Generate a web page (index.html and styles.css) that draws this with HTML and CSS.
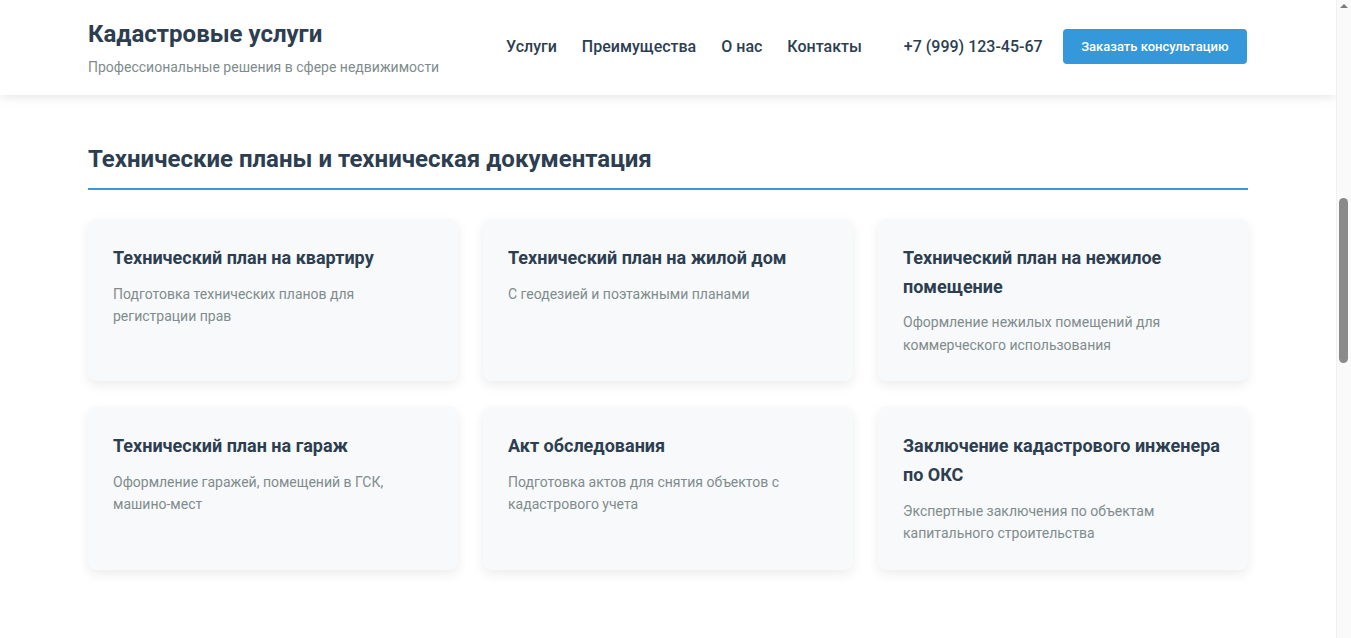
FILE: index.html
```html
<!DOCTYPE html>
<html lang="ru">
<head>
    <meta charset="UTF-8">
    <meta name="viewport" content="width=device-width, initial-scale=1.0">
    <title>Кадастровые услуги</title>
    <link rel="stylesheet" href="styles.css">
</head>
<body>
    <!-- Header -->
    <header class="site-header">
        <div class="container header-inner">
            <div class="logo">
                <h1>Кадастровые услуги</h1>
                <p>Профессиональные решения в сфере недвижимости</p>
            </div>
            <nav class="main-nav">
                <a href="#services">Услуги</a>
                <a href="#advantages">Преимущества</a>
                <a href="#about">О нас</a>
                <a href="#contacts">Контакты</a>
            </nav>
            <div class="header-contacts">
                <span class="phone">+7 (999) 123-45-67</span>
                <button class="btn">Заказать консультацию</button>
            </div>
        </div>
    </header>

    <!-- Services -->
    <section class="services" id="services">
        <div class="container">
            <h2 class="section-title">Технические планы и техническая документация</h2>
            <div class="service-grid">
                <div class="service-card">
                    <h3>Технический план на квартиру</h3>
                    <p>Подготовка технических планов для регистрации прав</p>
                </div>
                <div class="service-card">
                    <h3>Технический план на жилой дом</h3>
                    <p>С геодезией и поэтажными планами</p>
                </div>
                <div class="service-card">
                    <h3>Технический план на нежилое помещение</h3>
                    <p>Оформление нежилых помещений для коммерческого использования</p>
                </div>
                <div class="service-card">
                    <h3>Технический план на гараж</h3>
                    <p>Оформление гаражей, помещений в ГСК, машино-мест</p>
                </div>
                <div class="service-card">
                    <h3>Акт обследования</h3>
                    <p>Подготовка актов для снятия объектов с кадастрового учета</p>
                </div>
                <div class="service-card">
                    <h3>Заключение кадастрового инженера по ОКС</h3>
                    <p>Экспертные заключения по объектам капитального строительства</p>
                </div>
            </div>
        </div>
    </section>

    <!-- Scrollbar of the page window -->
    <div class="scrollbar">
        <span class="scroll-arrow"></span>
        <span class="scroll-thumb"></span>
    </div>
</body>
</html>
```

FILE: styles.css
```css
body {
    font-family: Roboto, 'Noto Sans', sans-serif;
    margin: 0 15px 0 0;
    background-color: #ffffff;
    color: #2c3e50;
}

.container {
    max-width: 1160px;
    margin: 0 auto;
}

.site-header {
    background: #ffffff;
    box-shadow: 0 2px 10px rgba(0, 0, 0, 0.1);
    position: relative;
    z-index: 2;
}

.header-inner {
    display: flex;
    align-items: center;
    height: 95px;
}

.logo h1 {
    margin: 0 0 1px;
    font-size: 24px;
    font-weight: 700;
    line-height: 1.2;
    color: #2c3e50;
}

.logo p {
    margin: 11px 0 0;
    font-size: 14px;
    color: #7f8c8d;
}

.main-nav {
    display: flex;
    gap: 25px;
    margin-left: auto;
    margin-right: 42px;
    margin-bottom: 2px;
}

.main-nav a {
    color: #2c3e50;
    text-decoration: none;
    font-size: 16px;
    font-weight: 500;
}

.header-contacts {
    display: flex;
    align-items: center;
    gap: 20px;
    margin-right: 1px;
}

.phone {
    font-size: 16px;
    font-weight: 500;
    margin-bottom: 2px;
}

.btn {
    background-color: #3498db;
    color: #ffffff;
    border: none;
    border-radius: 4px;
    padding: 0 18.5px;
    height: 35px;
    margin-bottom: 2px;
    font-family: inherit;
    font-size: 13px;
    font-weight: 500;
    cursor: pointer;
}

.services {
    padding: 50px 0 60px;
}

.section-title {
    margin: 0 0 29px;
    padding-bottom: 14px;
    border-bottom: 2px solid #3498db;
    font-size: 24px;
    font-weight: 700;
    line-height: 1.2;
}

.service-grid {
    display: grid;
    grid-template-columns: repeat(3, 1fr);
    gap: 26px 25px;
}

.service-card {
    background: #f8f9fa;
    border-radius: 8px;
    padding: 25px;
    box-shadow: 0 4px 12px rgba(0, 0, 0, 0.08);
}

.service-card h3 {
    margin: 0 0 10px;
    font-size: 18px;
    font-weight: 700;
    line-height: 1.6;
}

.service-card p {
    margin: 0;
    font-size: 14px;
    line-height: 1.6;
    color: #7f8c8d;
}

.scrollbar {
    position: fixed;
    top: 0;
    right: 0;
    bottom: 0;
    width: 15px;
    background: #fafafa;
    border-left: 1px solid #f0f0f0;
    box-sizing: border-box;
    z-index: 5;
}

.scroll-arrow {
    position: absolute;
    top: 4px;
    left: 3px;
    border-left: 4px solid transparent;
    border-right: 4px solid transparent;
    border-bottom: 4px solid #7a7a7a;
}

.scroll-thumb {
    position: absolute;
    top: 198px;
    left: 2px;
    width: 9px;
    height: 165px;
    border-radius: 5px;
    background: #8a8a8a;
}
```
